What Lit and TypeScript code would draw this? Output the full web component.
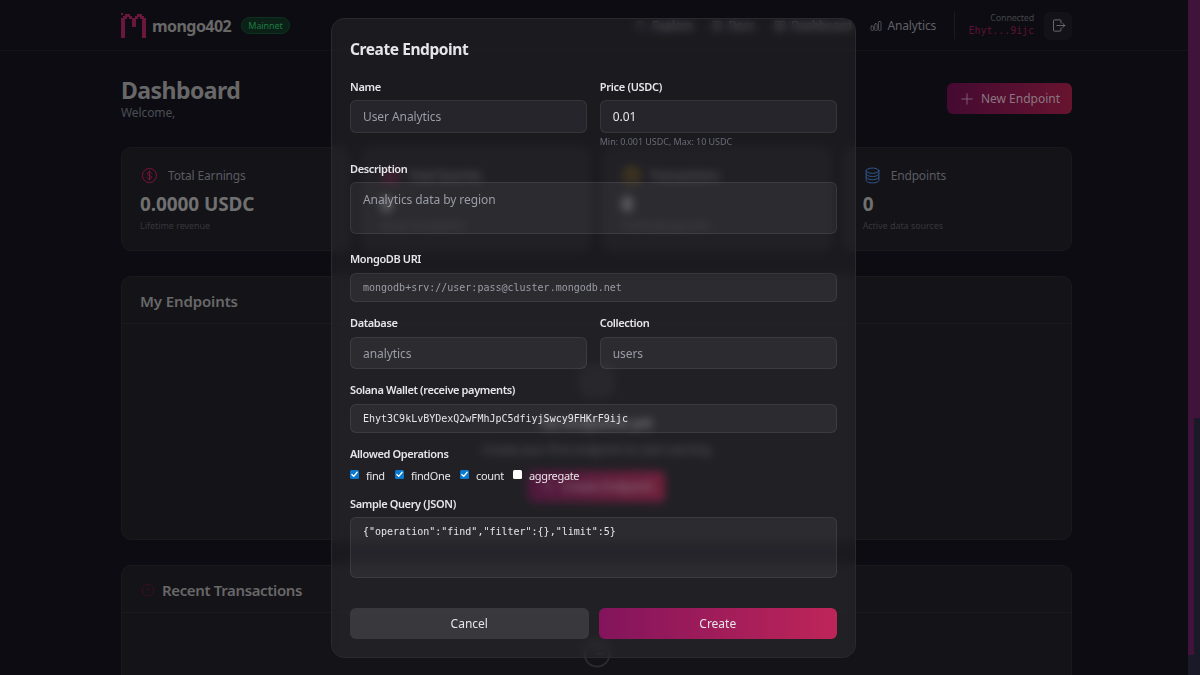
import { LitElement, html, css, svg } from "lit";
import { customElement } from "lit/decorators.js";

const coin = svg`<circle cx="12" cy="12" r="10"/><path d="M15 8.8c-.5-1.1-1.6-1.6-3-1.6-1.7 0-2.9.9-2.9 2.3 0 3.300 6 1.700 6 5 0 1.500-1.300 2.400-3.100 2.400-1.500 0-2.700-.6-3.200-1.800M12 5.500v13"/>`;
const clock = svg`<circle cx="12" cy="12" r="10"/><path d="M12 6v6h4"/>`;
const db = svg`<ellipse cx="12" cy="5.200" rx="9" ry="3.700"/><path d="M3 5.200v13.600c0 2 4 3.700 9 3.700s9-1.700 9-3.700V5.200M3 9.700c0 2 4 3.700 9 3.700s9-1.700 9-3.700M3 14.200c0 2 4 3.700 9 3.700s9-1.700 9-3.700"/>`;
const box = svg`<rect x="1.500" y="2" width="21" height="20" rx="3"/><path d="M1.500 12h21M7 7h10M7 17h10"/>`;
const plus = svg`<path d="M12 3v18M3 12h18"/>`;
const bars = svg`<rect x="2" y="12" width="5" height="9" rx="1.500"/><rect x="9.500" y="7.500" width="5" height="13.500" rx="1.500"/><rect x="17" y="3" width="5" height="18" rx="1.500"/>`;
const exit = svg`<path d="M16 8V4.500A1.500 1.500 0 0 0 14.500 3h-9A1.500 1.500 0 0 0 4 4.500v15A1.500 1.500 0 0 0 5.500 21h9a1.500 1.500 0 0 0 1.500-1.500V16M9.500 12H22M19 8.800l3 3.200-3 3.200"/>`;
const search = svg`<circle cx="10" cy="10" r="7"/><path d="M15.500 15.500L21 21"/>`;
const doc = svg`<rect x="4" y="3" width="16" height="18" rx="2"/><path d="M8 8h8M8 12h8M8 16h5"/>`;
const grid = svg`<rect x="3" y="3" width="7" height="7"/><rect x="14" y="3" width="7" height="7"/><rect x="3" y="14" width="7" height="7"/><rect x="14" y="14" width="7" height="7"/>`;

const icon = (shape: unknown, cls = "") =>
  html`<svg class="ic ${cls}" viewBox="0 0 24 24">${shape}</svg>`;

@customElement("app-root")
export class AppRoot extends LitElement {
  static styles = css`
    :host { display: block; position: relative; width: 1200px; height: 675px; overflow: hidden;
      background: #0d0c12; color: #686868; font: 12px/16px "Noto Sans", "Open Sans", sans-serif; letter-spacing: -.1px; }
    * { box-sizing: border-box; }
    .ic { display: block; width: 12px; height: 12px; fill: none; stroke: currentColor; stroke-width: 1.500; stroke-linecap: round; stroke-linejoin: round; flex: none; }
    header { height: 51px; border-bottom: 1px solid #141319; }
    .wrap { width: 951px; margin-left: 121px; }
    .bar { display: flex; align-items: center; height: 50px; }
    .logo { width: 25px; height: 25px; flex: none; color: #6a163d; }
    .brand { margin-left: 6px; width: 80px; font-size: 16px; font-weight: 700; line-height: 22px; letter-spacing: -.55px; padding-top: 2px; }
    .badge { margin-left: 9px; width: 49px; height: 17px; border: 1px solid #0d3320; border-radius: 9px; background: #0b2117; color: #1f7a43; font-size: 9px; line-height: 15px; text-align: center; }
    nav { display: flex; align-items: center; margin-left: auto; color: #5f6166; font-size: 12px; padding-top: 1px; }
    .link { display: flex; align-items: center; gap: 5px; letter-spacing: -.15px; }
    .link span { padding-top: 1px; }
    .l1 { width: 76px; } .l2 { width: 63px; } .l3 { width: 96px; } .l4 { width: 84px; gap: 5.500px; }
    .who { border-left: 1px solid #1b1a20; height: 27px; width: 80px; text-align: right; font-size: 9px; line-height: 12px; color: #424448; margin-right: 10px; letter-spacing: -.2px; }
    .addr { font-family: "DejaVu Sans Mono", monospace; font-size: 9.900px; line-height: 14px; color: #5c1236; letter-spacing: 0; }
    .out { width: 28px; height: 28px; border-radius: 6px; background: #131218; display: grid; place-items: center; color: #74747a; }
    .out .ic { width: 15px; height: 15px; stroke-width: 1.400; }
    .top { display: flex; justify-content: space-between; height: 95.500px; padding-top: 25px; }
    h1 { margin: 0; font-size: 23px; line-height: 28px; font-weight: 700; letter-spacing: -.55px; }
    .sub { line-height: 18px; color: #4b4e55; }
    .new { display: flex; align-items: center; justify-content: center; gap: 7px; width: 125px; height: 31px; margin-top: 7px; border-radius: 6px; background: linear-gradient(90deg, #440a31, #67142f); color: #8a7781; letter-spacing: 0; padding-left: 1px; }
    .new .ic { width: 14px; height: 14px; stroke-width: 1.300; }
    .new span { padding-top: 1px; }
    .stats { display: grid; grid-template-columns: repeat(4, 1fr); gap: 12.500px; }
    .card { background: #141318; border: 1px solid #1a191e; border-radius: 10px; }
    .stat { height: 104px; padding: 19px 18px; }
    .head { display: flex; align-items: center; gap: 10px; height: 18px; color: #5a5c62; padding-left: 1px; letter-spacing: -.15px; }
    .head span { padding-top: 1px; }
    .head .ic { width: 17px; height: 17px; stroke-width: 1.300; }
    .head .pink { color: #82123f; } .head .gold { color: #7d5c06; stroke-width: 2; } .head .blue { color: #315a94; }
    .val { font-size: 19px; font-weight: 700; line-height: 24px; margin-top: 7px; color: #707070; letter-spacing: -.1px; }
    .note { font-size: 9px; line-height: 12px; margin-top: 4px; color: #36373d; letter-spacing: -.05px; }
    .panel { height: 264.500px; margin-top: 25px; }
    .title { display: flex; align-items: center; gap: 7px; height: 47px; padding: 2px 18px 0; border-bottom: 1px solid #1a191e; font-size: 15px; font-weight: 600; letter-spacing: -.12px; }
    .title.tight { letter-spacing: -.36px; padding-left: 19px; }
    .title .ic { color: #400e24; width: 14px; height: 14px; }
    .empty { display: flex; flex-direction: column; align-items: center; padding-top: 41px; }
    .empty .big { width: 32px; height: 32px; color: #2a2c31; stroke-width: 1.500; }
    .e1 { font-size: 14px; font-weight: 600; line-height: 20px; margin-top: 16px; color: #6c6c6c; letter-spacing: -.4px; }
    .e2 { line-height: 18px; margin-top: 8px; color: #4b4e55; letter-spacing: -.18px; }
    .e3 { width: 137px; margin-top: 12px; height: 31px; }
    .tx { padding-top: 26px; }
    .tx .big { width: 30px; height: 30px; }
    .scroll { position: absolute; right: 0; top: 0; width: 12px; height: 675px; background: #1a1928; }
    .thumb { height: 418px; background: #40143a; }
    .thumb2 { width: 6px; height: 237px; background: #40143a; }
    .modal { position: absolute; left: 330.500px; top: 18px; width: 525.500px; height: 640px; padding: 18px 18px 0 18.500px; border: 1px solid #29292e; border-radius: 13px;
      background: rgba(255,255,255,.06); backdrop-filter: blur(4px); color: #e6e6e8; display: flex; flex-direction: column; }
    h2 { margin: 0; font-size: 15.500px; line-height: 24px; font-weight: 700; letter-spacing: -.42px; }
    .row { display: grid; grid-template-columns: 1fr 1fr; gap: 12.500px; }
    .lab { display: block; font-size: 11px; font-weight: 600; line-height: 16px; height: 21px; letter-spacing: -.38px; }
    input, textarea { display: block; width: 100%; margin: 0; border: 1px solid rgba(255,255,255,.08); border-radius: 6px; background: rgba(255,255,255,.05);
      color: #e6e6e8; font: 12px/17px "Noto Sans", sans-serif; letter-spacing: -.08px; padding: 0 12px; height: 33px; resize: none; outline: none; overflow: hidden; }
    input::placeholder, textarea::placeholder { color: #9a9ca7; opacity: 1; }
    input.mono, textarea.mono { height: 29px; font: 10px/14px "DejaVu Sans Mono", monospace; letter-spacing: 0; }
    textarea { height: 52px; padding-top: 8px; }
    textarea.mono { height: 61px; padding-top: 7px; }
    .hint { font-size: 9px; line-height: 12px; margin-top: 3px; color: #696b76; letter-spacing: -.05px; }
    .f1 { margin-top: 18px; } .f2 { margin-top: 13px; } .f3 { margin-top: 17px; } .f4 { margin-top: 13px; } .f5 { margin-top: 13px; } .f6 { margin-top: 13px; } .f7 { margin-top: 12px; }
    .f1 .lab { letter-spacing: -.3px; }
    .f3 .lab, .f4 .lab, .f5 .lab, .f6 .lab { height: 22px; }
    .f4 input { height: 32px; }
    .ops { display: flex; height: 16px; font-size: 11px; letter-spacing: -.35px; }
    .op { display: flex; gap: 7px; }
    .o1 { width: 45px; } .o2 { width: 65px; } .o3 { width: 53px; }
    .cb { width: 9px; height: 9px; margin-top: 2px; border-radius: 1.500px; background: #fff; display: block; }
    .on { background: #0b78d0; color: #fff; }
    .cb .ic { width: 9px; height: 9px; stroke-width: 3.500; }
    .btns { display: grid; grid-template-columns: 1fr 1fr; gap: 10px; margin-top: 29.500px; }
    .btn { height: 31px; border-radius: 6px; text-align: center; line-height: 32px; background: rgba(255,255,255,.11); letter-spacing: 0; }
    .go { background: linear-gradient(90deg, #83145c, #be2558); }
  `;

  private stat(shape: unknown, tone: string, label: string, value: string, note: string) {
    return html`<div class="card stat"><div class="head">${icon(shape, tone)}<span>${label}</span></div>
      <div class="val">${value}</div><div class="note">${note}</div></div>`;
  }

  private op(name: string, cls: string, on = true) {
    return html`<label class="op ${cls}"><span class="cb ${on ? "on" : ""}">${on ? icon(svg`<path d="M5 12l5 5 9-11"/>`) : ""}</span><span>${name}</span></label>`;
  }

  render() {
    return html`
      <header><div class="wrap bar">
        <svg class="logo" viewBox="0 0 25 25" fill="currentColor"><path d="M0 0h2v2H0zM0 5h2V3h2V1h5v2h2v2h3V3h2V1h5v2h2v2h2v20h-4V6h-2V4h-2v2h-2v8h-4V6H8V4H6v2H4v19H0z"/></svg>
        <span class="brand">mongo402</span><span class="badge">Mainnet</span>
        <nav>
          <span class="link l1">${icon(search)}<span>Explore</span></span>
          <span class="link l2">${icon(doc)}<span>Docs</span></span>
          <span class="link l3">${icon(grid)}<span>Dashboard</span></span>
          <span class="link l4">${icon(bars)}<span>Analytics</span></span>
          <div class="who">Connected<div class="addr">Ehyt...9ijc</div></div>
          <span class="out">${icon(exit)}</span>
        </nav>
      </div></header>
      <main class="wrap">
        <div class="top"><div><h1>Dashboard</h1><div class="sub">Welcome,</div></div><div class="new">${icon(plus)}<span>New Endpoint</span></div></div>
        <section class="stats">
          ${this.stat(coin, "pink", "Total Earnings", "0.0000 USDC", "Lifetime revenue")}
          ${this.stat(bars, "pink", "Total Queries", "0", "Across all endpoints")}
          ${this.stat(clock, "gold", "Transactions", "0", "Confirmed payments")}
          ${this.stat(db, "blue", "Endpoints", "0", "Active data sources")}
        </section>
        <section class="card panel"><div class="title">My Endpoints</div>
          <div class="empty">${icon(box, "big")}<div class="e1">No endpoints yet</div><div class="e2">Create your first endpoint to start earning</div>
          <div class="new e3">${icon(plus)}<span>Create Endpoint</span></div></div></section>
        <section class="card panel"><div class="title tight">${icon(clock)}<span>Recent Transactions</span></div>
          <div class="empty tx">${icon(clock, "big")}</div></section>
      </main>
      <div class="scroll"><div class="thumb"></div><div class="thumb2"></div></div>
      <div class="modal">
        <h2>Create Endpoint</h2>
        <div class="row f1"><div><label class="lab">Name</label><input placeholder="User Analytics"></div>
          <div><label class="lab">Price (USDC)</label><input value="0.01"><div class="hint">Min: 0.001 USDC, Max: 10 USDC</div></div></div>
        <div class="f2"><label class="lab">Description</label><textarea placeholder="Analytics data by region"></textarea></div>
        <div class="f3"><label class="lab">MongoDB URI</label><input class="mono" placeholder="mongodb+srv://user:pass@cluster.mongodb.net"></div>
        <div class="row f4"><div><label class="lab">Database</label><input placeholder="analytics"></div><div><label class="lab">Collection</label><input placeholder="users"></div></div>
        <div class="f5"><label class="lab">Solana Wallet (receive payments)</label><input class="mono" value="Ehyt3C9kLvBYDexQ2wFMhJpC5dfiyjSwcy9FHKrF9ijc"></div>
        <div class="f6"><label class="lab">Allowed Operations</label><div class="ops">${this.op("find", "o1")}${this.op("findOne", "o2")}${this.op("count", "o3")}${this.op("aggregate", "", false)}</div></div>
        <div class="f7"><label class="lab">Sample Query (JSON)</label><textarea class="mono" .value=${'{"operation":"find","filter":{},"limit":5}'}></textarea></div>
        <div class="btns"><div class="btn">Cancel</div><div class="btn go">Create</div></div>
      </div>`;
  }
}
